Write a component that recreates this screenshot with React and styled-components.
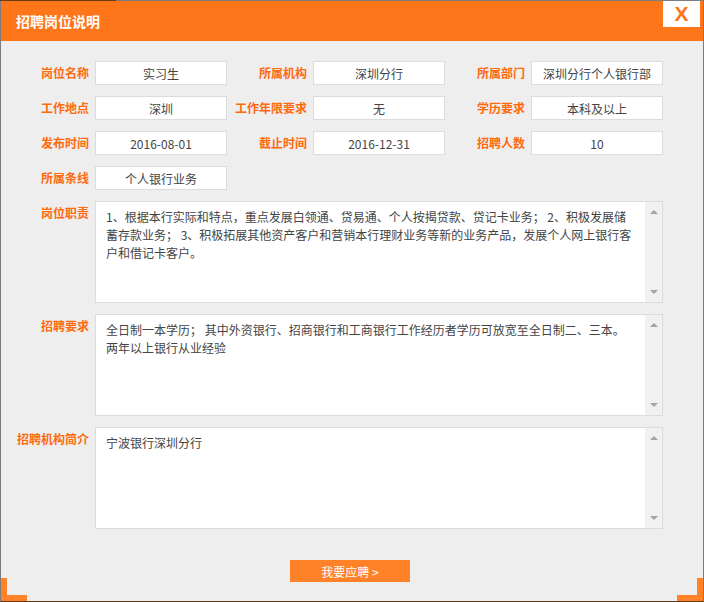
import React from "react";
import styled, { createGlobalStyle } from "styled-components";

const Global = createGlobalStyle`
  html, body { margin: 0; padding: 0; background: #ffffff; }
  body { font-family: "Microsoft YaHei", "Noto Sans CJK SC", sans-serif; }
  * { box-sizing: border-box; }
`;

const ORANGE = "#ff7519";
const LABEL = "#ff6a0d";

const Window = styled.div`
  position: relative;
  width: 704px;
  height: 602px;
  background: #eeeeee;
  border: 1px solid #7c7c7c;
  border-bottom-color: #5e3913;
  display: flex;
  flex-direction: column;
  &::before {
    content: "";
    position: absolute;
    top: -1px;
    left: -1px;
    width: 116px;
    height: 1px;
    background: #6b3c12;
  }
`;

const Header = styled.div`
  height: 40px;
  background: ${ORANGE};
  display: flex;
  align-items: center;
  padding-left: 15px;
  flex-shrink: 0;
`;

const Title = styled.h1`
  margin: 0;
  font-size: 14px;
  font-weight: bold;
  color: #ffffff;
`;

const Close = styled.button`
  position: absolute;
  top: 0;
  right: 3px;
  width: 37px;
  height: 26px;
  border: none;
  padding: 0;
  background: #ffffff;
  color: ${ORANGE};
  font-family: "Liberation Sans", Arial, sans-serif;
  font-weight: bold;
  font-size: 21px;
  line-height: 24px;
  text-align: center;
  cursor: pointer;
`;

const Body = styled.div`
  padding: 20px 0 0 8px;
  display: flex;
  flex-direction: column;
  gap: 11px;
`;

const Rows = styled.div`
  display: flex;
  flex-wrap: wrap;
  row-gap: 11px;
  width: 654px;
`;

const Cell = styled.div`
  display: flex;
  gap: 6px;
  width: 218px;
`;

const Label = styled.div`
  width: 80px;
  flex-shrink: 0;
  font-size: 12px;
  font-weight: bold;
  color: ${LABEL};
  line-height: 24px;
  text-align: right;
  white-space: nowrap;
`;

const Value = styled.div`
  width: 132px;
  height: 24px;
  background: #ffffff;
  border: 1px solid #dcdcdc;
  font-size: 12px;
  color: #444444;
  display: flex;
  align-items: center;
  justify-content: center;
  white-space: nowrap;
  overflow: hidden;
`;

const AreaRow = styled.div`
  display: flex;
  gap: 6px;
`;

const AreaBox = styled.div`
  width: 568px;
  height: 102px;
  background: #ffffff;
  border: 1px solid #dcdcdc;
  display: flex;
`;

const AreaText = styled.div`
  flex: 1;
  padding: 6px 4px 0 10px;
  font-size: 12px;
  line-height: 18px;
  color: #444444;
  white-space: nowrap;
  overflow: hidden;
`;

const Track = styled.div`
  width: 17px;
  background: #f1f1f1;
  display: flex;
  flex-direction: column;
  justify-content: space-between;
  align-items: center;
  padding: 8px 0;
`;

const Arrow = styled.span`
  width: 0;
  height: 0;
  border-left: 4px solid transparent;
  border-right: 4px solid transparent;
  ${(p) =>
    p.$down
      ? "border-top: 4px solid #a3a3a3;"
      : "border-bottom: 4px solid #a3a3a3;"}
`;

const Footer = styled.div`
  display: flex;
  justify-content: center;
  padding: 31px 4px 0 0;
`;

const Apply = styled.button`
  width: 120px;
  height: 22px;
  border: none;
  background: #ff8229;
  color: #ffffff;
  font-family: "Microsoft YaHei", "Noto Sans CJK SC", sans-serif;
  font-size: 12px;
  padding: 0;
  cursor: pointer;
`;

const Corner = styled.span`
  position: absolute;
  bottom: 0;
  width: 26px;
  height: 23px;
  border-bottom: 6px solid #ff8229;
  ${(p) =>
    p.$right
      ? "right: 0; border-right: 6px solid #ff8229;"
      : "left: 0; border-left: 6px solid #ff8229;"}
`;

const fields = [
  ["岗位名称", "实习生"],
  ["所属机构", "深圳分行"],
  ["所属部门", "深圳分行个人银行部"],
  ["工作地点", "深圳"],
  ["工作年限要求", "无"],
  ["学历要求", "本科及以上"],
  ["发布时间", "2016-08-01"],
  ["截止时间", "2016-12-31"],
  ["招聘人数", "10"],
  ["所属条线", "个人银行业务"],
];

const areas = [
  [
    "岗位职责",
    [
      "1、根据本行实际和特点，重点发展白领通、贷易通、个人按揭贷款、贷记卡业务； 2、积极发展储",
      "蓄存款业务； 3、积极拓展其他资产客户和营销本行理财业务等新的业务产品，发展个人网上银行客",
      "户和借记卡客户。",
    ],
  ],
  [
    "招聘要求",
    [
      "全日制一本学历； 其中外资银行、招商银行和工商银行工作经历者学历可放宽至全日制二、三本。",
      "两年以上银行从业经验",
    ],
  ],
  ["招聘机构简介", ["宁波银行深圳分行"]],
];

export default function App() {
  return (
    <>
      <Global />
      <Window>
        <Header>
          <Title>招聘岗位说明</Title>
        </Header>
        <Close aria-label="关闭">X</Close>
        <Body>
          <Rows>
            {fields.map(([l, v]) => (
              <Cell key={l}>
                <Label>{l}</Label>
                <Value>{v}</Value>
              </Cell>
            ))}
          </Rows>
          {areas.map(([l, lines]) => (
            <AreaRow key={l}>
              <Label>{l}</Label>
              <AreaBox>
                <AreaText>
                  {lines.map((t, i) => (
                    <div key={i}>{t}</div>
                  ))}
                </AreaText>
                <Track>
                  <Arrow />
                  <Arrow $down />
                </Track>
              </AreaBox>
            </AreaRow>
          ))}
        </Body>
        <Footer>
          <Apply>我要应聘 &gt;</Apply>
        </Footer>
        <Corner />
        <Corner $right />
      </Window>
    </>
  );
}
